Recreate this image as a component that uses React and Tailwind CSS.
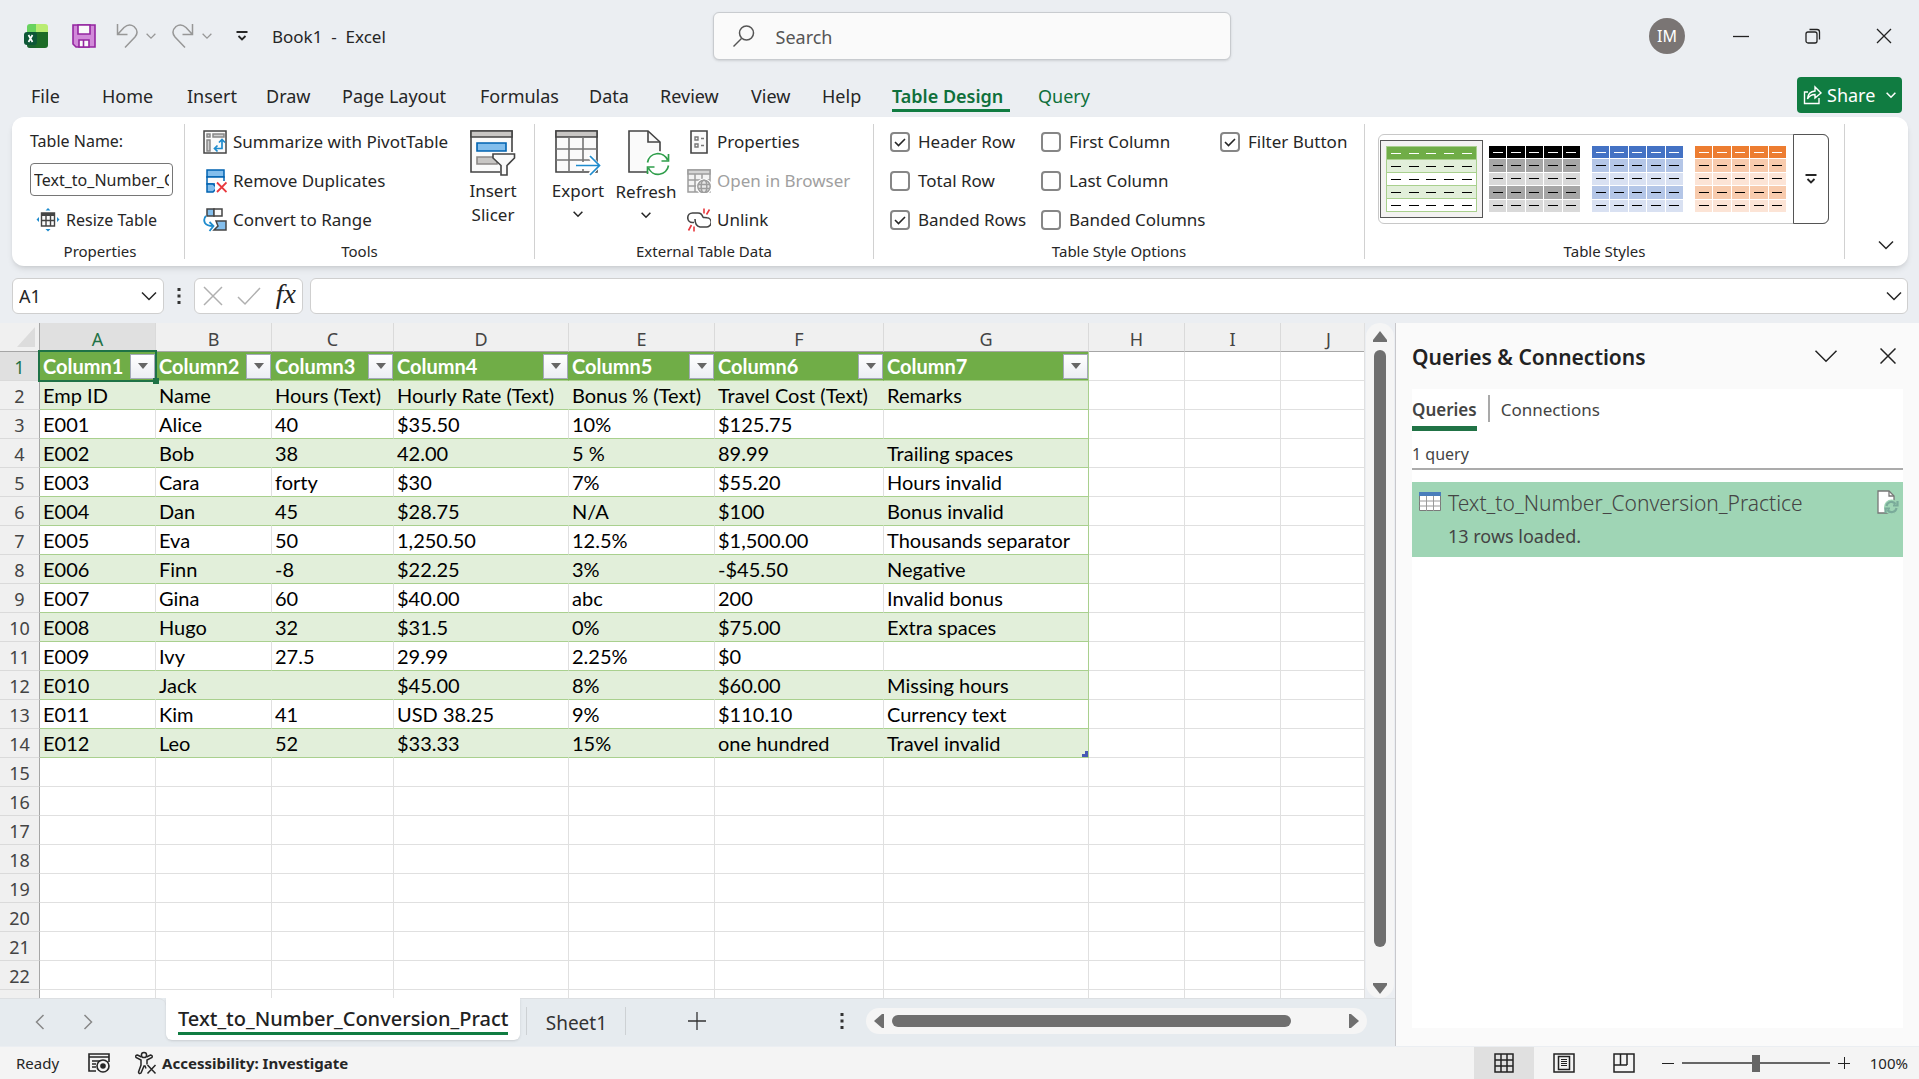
import React, { useState } from 'react';

const COLUMNS = ['A', 'B', 'C', 'D', 'E', 'F', 'G', 'H', 'I', 'J'];
const COL_WIDTHS = ['w-[116px]', 'w-[116px]', 'w-[122px]', 'w-[175px]', 'w-[146px]', 'w-[169px]', 'w-[205px]', 'w-24', 'w-24', 'w-24'];

const ROWS = [
    ['Column1', 'Column2', 'Column3', 'Column4', 'Column5', 'Column6', 'Column7'],
    ['Emp ID', 'Name', 'Hours (Text)', 'Hourly Rate (Text)', 'Bonus % (Text)', 'Travel Cost (Text)', 'Remarks'],
    ['E001', 'Alice', '40', '$35.50', '10%', '$125.75', ''],
    ['E002', 'Bob', '38', '42.00', '5 %', '89.99', 'Trailing spaces'],
    ['E003', 'Cara', 'forty', '$30', '7%', '$55.20', 'Hours invalid'],
    ['E004', 'Dan', '45', '$28.75', 'N/A', '$100', 'Bonus invalid'],
    ['E005', 'Eva', '50', '1,250.50', '12.5%', '$1,500.00', 'Thousands separator'],
    ['E006', 'Finn', '-8', '$22.25', '3%', '-$45.50', 'Negative'],
    ['E007', 'Gina', '60', '$40.00', 'abc', '200', 'Invalid bonus'],
    ['E008', 'Hugo', '32', '$31.5', '0%', '$75.00', 'Extra spaces'],
    ['E009', 'Ivy', '27.5', '29.99', '2.25%', '$0', ''],
    ['E010', 'Jack', '', '$45.00', '8%', '$60.00', 'Missing hours'],
    ['E011', 'Kim', '41', 'USD 38.25', '9%', '$110.10', 'Currency text'],
    ['E012', 'Leo', '52', '$33.33', '15%', 'one hundred', 'Travel invalid'],
];

const TOTAL_ROWS = 23;

const MENU = ['File', 'Home', 'Insert', 'Draw', 'Page Layout', 'Formulas', 'Data', 'Review', 'View', 'Help'];
const MENU_WIDTHS = ['w-[71px]', 'w-[85px]', 'w-[79px]', 'w-[76px]', 'w-[138px]', 'w-[109px]', 'w-[71px]', 'w-[91px]', 'w-[71px]', 'w-[70px]'];

const STYLES = [
    { name: 'Black', head: 'bg-black', dark: 'bg-[#a6a6a6]', light: 'bg-[#d9d9d9]' },
    { name: 'Blue', head: 'bg-[#4472c4]', dark: 'bg-[#b4c6e7]', light: 'bg-[#d9e1f2]' },
    { name: 'Orange', head: 'bg-[#ed7d31]', dark: 'bg-[#f8cbad]', light: 'bg-[#fce4d6]' },
];

/* ---------- Icons ---------- */

const Chevron = ({ className = 'w-4 h-4', strokeWidth = 1.5 }) => (
    <svg viewBox="0 0 16 16" className={className} fill="none" stroke="currentColor" strokeWidth={strokeWidth}>
        <path d="M1 4.500l7 7 7-7" />
    </svg>
);

const MoreDown = () => (
    <svg width="12" height="12" viewBox="0 0 12 12" fill="none" stroke="currentColor">
        <path d="M0.5 2h11" strokeWidth="2" />
        <path d="M2.5 6l3.500 3.500L9.500 6" strokeWidth="1.800" />
    </svg>
);

const ExcelLogo = () => (
    <svg width="24" height="24" viewBox="0 0 24 24">
        <path d="M3 3q0-3 3-3h6v8H3z" fill="#68d25f" />
        <path d="M12 0h9q3 0 3 3v5H12z" fill="#b9ec72" />
        <path d="M3 8h21v13q0 3-3 3H6q-3 0-3-3z" fill="#1c6b27" />
        <path d="M3 8h9v16H6q-3 0-3-3z" fill="#185c37" opacity=".5" />
        <rect x="0" y="8" width="13" height="13" rx="3" fill="#0d5737" />
        <path d="M4.500 11l4 7M8.500 11l-4 7" stroke="#fff" strokeWidth="1.700" />
    </svg>
);

const SaveIcon = () => (
    <svg width="24" height="24" viewBox="0 0 24 24" fill="#d18ad9" stroke="#9426a0" strokeWidth="1.600">
        <path d="M1 1h22v22H4l-3-3z" />
        <path d="M6 1h12v9H6z" fill="#fafafa" />
        <path d="M7 23v-7h10v7z" fill="#fafafa" />
        <path d="M11.500 16v7" />
    </svg>
);

const UndoIcon = ({ flip }) => (
    <svg width="22" height="24" viewBox="0 0 22 24" fill="none" stroke="#979797" strokeWidth="1.500" className={flip ? '-scale-x-100' : ''}>
        <path d="M1.500 0v10.500h10M2 10L8 3.500Q13-1 18 2.500q5.500 5 1 10.500L9 23.500" />
    </svg>
);

const PivotIcon = () => (
    <svg width="24" height="24" viewBox="0 0 24 24" fill="none" stroke="#444" strokeWidth="1.500">
        <rect x="1" y="1" width="22" height="22" fill="#fafafa" />
        <path d="M4 4h3v3H4zM10 4h11v3H10zM4 10h3v11H4z" fill="#d0d0d0" stroke="#888" />
        <path d="M12 18.500h7v-8M14.500 15.500l-3 3 3 3M16 12.500l3-3 3 3" stroke="#1e8bcd" strokeWidth="1.700" />
    </svg>
);

const DuplicatesIcon = () => (
    <svg width="24" height="24" viewBox="0 0 24 24" fill="#83beec" stroke="#0063b1" strokeWidth="1.500">
        <path d="M4 1h17v7H4z" />
        <path d="M4 8h17v7H4z" fill="#fafafa" />
        <path d="M4 15h6l4 4-4 4H4z" />
        <path d="M12 12h12v12H12z" fill="#fff" stroke="none" />
        <path d="M14 13.500l9.500 9.500M23.500 13.500L14 23" stroke="#e8383d" strokeWidth="1.800" />
    </svg>
);

const RangeIcon = () => (
    <svg width="24" height="24" viewBox="0 0 24 24" fill="#83beec" stroke="#444" strokeWidth="1.500">
        <path d="M4 1h7v7H4z" />
        <path d="M11 1h8v7h-8z" fill="#fafafa" />
        <path d="M13 13h10v9H11l4-4z" />
        <path d="M3 8q-3 3-1 7 2 3 8 3M6.500 14l4 4-4 5" fill="none" stroke="#1e8bcd" strokeWidth="1.800" />
    </svg>
);

const ResizeIcon = () => (
    <svg width="24" height="24" viewBox="0 0 24 24" fill="none" stroke="#444" strokeWidth="1.400">
        <path d="M5.500 5h13v13h-13z" fill="#fafafa" />
        <path d="M5.500 6.500h13" strokeWidth="3" />
        <path d="M5.500 12.500h13M10 8v10M14.500 8v10" />
        <path d="M12 0l2.500 2.500h-5zM12 23.500l2.500-2.500h-5zM0.500 11.500L3 9v5zM23.500 11.500L21 9v5z" fill="#1e8bcd" stroke="none" />
    </svg>
);

const SlicerIcon = () => (
    <svg width="46" height="46" viewBox="0 0 46 46" fill="none" stroke="#444" strokeWidth="1.600">
        <path d="M1 1h41v41H1z" fill="#fafafa" />
        <path d="M1 1h41v6H1z" fill="#c8c6c4" />
        <path d="M7 13h29v8H7z" fill="#83beec" stroke="#0063b1" />
        <path d="M7 27h20v7H7z" fill="#c8c6c4" stroke="#8a8886" />
        <path d="M21 22h25v24H30V34z" fill="#fff" stroke="none" />
        <path d="M23 24h21.500v4L37 35.500V45h-6v-9.500L23 28z" fill="#fafafa" />
    </svg>
);

const ExportIcon = () => (
    <svg width="46" height="46" viewBox="0 0 46 46" fill="none" stroke="#444" strokeWidth="1.600">
        <path d="M1 1h41v41H1z" fill="#fafafa" />
        <path d="M1 1h41v6H1z" fill="#c8c6c4" />
        <path d="M1 19h41M1 30h41M14 7v35M28 7v35" stroke="#767676" />
        <path d="M22 32h14l-4-7h5l9 11-9 10h-5l4-7H22z" fill="#fff" stroke="none" />
        <path d="M21 35.500h23M35 26l9.500 9.500L35 45" stroke="#1e8bcd" strokeWidth="1.700" />
    </svg>
);

const RefreshIcon = () => (
    <svg width="42" height="46" viewBox="0 0 42 46" fill="none" stroke="#444" strokeWidth="1.600">
        <path d="M1 1h19l12 11v30H1z" fill="#fafafa" />
        <path d="M20 1v11h12" />
        <circle cx="30" cy="34" r="13" fill="#fff" stroke="none" />
        <path d="M19.500 32.500a10.500 10.500 0 0 1 20-2.500M40.500 35.500a10.500 10.500 0 0 1-20 2.500M40.500 24v7h-7M19.500 44v-7h7" stroke="#2f9e4b" strokeWidth="1.700" />
    </svg>
);

const PropertiesIcon = () => (
    <svg width="24" height="24" viewBox="0 0 24 24" fill="none" stroke="#444" strokeWidth="1.600">
        <path d="M4 1h16v22H4z" fill="#fafafa" />
        <path d="M8 7h3v3H8zM8 14h3v3H8zM14 8.500h3M14 15.500h3" stroke="#777" strokeWidth="1.400" />
    </svg>
);

const BrowserIcon = () => (
    <svg width="24" height="24" viewBox="0 0 24 24" fill="none" stroke="#9d9d9d" strokeWidth="1.500">
        <path d="M1 1h22v22H1z" fill="#f3f3f3" />
        <path d="M1 1h22v4H1z" fill="#d5d5d5" />
        <path d="M1 11h22M1 17h22M8 5v18M15 5v18" />
        <circle cx="17" cy="17.500" r="8" fill="#fff" stroke="none" />
        <circle cx="17" cy="17.500" r="6.200" fill="#e8e8e8" />
        <ellipse cx="17" cy="17.500" rx="2.800" ry="6.200" />
        <path d="M11 15.500h12M11 19.500h12" />
    </svg>
);

const UnlinkIcon = () => (
    <svg width="24" height="24" viewBox="0 0 24 24" fill="none" stroke="#444" strokeWidth="1.600">
        <path d="M7 14.500H5.500a4.500 4.500 0 0 1 0-9.500H11q4 0 5 4.500" />
        <path d="M8 11q0 7 5 8h6a4.500 4.500 0 0 0 1-9.300q-2-.4-4-.2" />
        <path d="M17 0.500v5M22.500 1.500l-3 5M1.500 22.500l3-5.500M7 18.500v5" stroke="#e8383d" />
    </svg>
);

const AccessibilityIcon = () => (
    <svg width="24" height="24" viewBox="0 0 24 24" fill="none" stroke="#262626" strokeWidth="1.500">
        <circle cx="10" cy="4" r="2.600" />
        <path d="M7.500 6L3.500 4Q1 4 2 6.500L7 9v5l-2.500 7q.5 2.500 2.500 1l3-7h1l1 2.500M12.500 6l4-2q2.500.5 1.500 2.500L13 9v4.500" />
        <path d="M13.500 14l8 8.500M21.500 14l-8 8.500" />
    </svg>
);

const MacroIcon = () => (
    <svg width="22" height="20" viewBox="0 0 22 20" fill="none" stroke="#262626" strokeWidth="1.600">
        <path d="M8 18H1V1h20v8" />
        <path d="M1 4h20M4 8h8M4 11h4M4 14h4" />
        <circle cx="15" cy="13" r="6" />
        <circle cx="15" cy="13" r="2.800" fill="#262626" stroke="none" />
    </svg>
);

const QueryTableIcon = () => (
    <svg width="22" height="20" viewBox="0 0 22 20" fill="#fff" stroke="#7a7a7a">
        <path d="M.5.5h21v18H.5z" />
        <path d="M.5 9h21M.5 14h21M7.500 4v15M14.500 4v15" stroke="#9a9a9a" />
        <path d="M0 0h22v4H0z" fill="#4a7ebb" stroke="none" />
    </svg>
);

const QueryRefreshIcon = () => (
    <svg width="22" height="24" viewBox="0 0 22 24" fill="none">
        <path d="M1 1h11l5 5v17H1z" fill="#fff" stroke="#777" strokeWidth="1.300" />
        <path d="M12 1v5h5" stroke="#777" strokeWidth="1.300" />
        <circle cx="14.500" cy="17" r="7.500" fill="#9fd5b5" />
        <path d="M9.500 16a5 5 0 0 1 9-2M19.500 18a5 5 0 0 1-9 2M20.500 11v4.500H16M8.500 23v-4.500H13" stroke="#7aab9a" strokeWidth="2.200" />
    </svg>
);

/* ---------- Ribbon parts ---------- */

const Group = ({ label, className, contentClass, children }) => (
    <section aria-label={label} className={`flex flex-col border-r border-[#d1d1d1] shrink-0 ${className}`}>
        <div className={`flex-1 ${contentClass}`}>{children}</div>
        <div className="h-[18px] text-center text-[15px] leading-5">{label}</div>
    </section>
);

const ToolButton = ({ icon, label, disabled }) => (
    <button disabled={disabled} className="flex items-center gap-1.5 h-[39px] whitespace-nowrap disabled:text-[#a0a0a0]">
        {icon}
        {label}
    </button>
);

const Check = ({ label, initial = false }) => {
    const [checked, setChecked] = useState(initial);
    return (
        <label className="flex items-center gap-2 h-[39px] whitespace-nowrap">
            <span className="grid w-5 h-5">
                <input
                    type="checkbox"
                    checked={checked}
                    onChange={(e) => setChecked(e.target.checked)}
                    className="col-start-1 row-start-1 appearance-none w-5 h-5 border-2 border-[#868686] rounded-sm bg-white"
                />
                {checked && (
                    <svg viewBox="0 0 20 20" className="col-start-1 row-start-1 w-5 h-5 pointer-events-none" fill="none" stroke="#262626" strokeWidth="1.600">
                        <path d="M5 10l3.500 3.500L15 7" />
                    </svg>
                )}
            </span>
            {label}
        </label>
    );
};

const StylePreview = ({ head, dark, light }) => (
    <span className="grid grid-cols-5 gap-px w-[91px] h-[66px]">
        {[0, 1, 2, 3, 4].map(row => (
            [0, 1, 2, 3, 4].map(col => (
                <span key={`${row}-${col}`} className={`grid place-items-center ${row === 0 ? head : row % 2 ? dark : light}`}>
                    <span className={`w-2.5 h-px ${row === 0 ? 'bg-white' : 'bg-black'}`} />
                </span>
            ))
        ))}
    </span>
);

const GreenPreview = () => (
    <span className="flex flex-col w-[91px] h-[66px] border border-[#a9d08e] bg-white divide-y divide-[#a9d08e]">
        {[0, 1, 2, 3, 4].map(row => (
            <span key={row} className={`flex-1 flex items-center justify-around ${row === 0 ? 'bg-[#70ad47]' : row % 2 ? 'bg-[#e2efda]' : 'bg-white'}`}>
                {[0, 1, 2, 3, 4].map(col => (
                    <span key={col} className={`w-2.5 h-px ${row === 0 ? 'bg-white' : 'bg-black'}`} />
                ))}
            </span>
        ))}
    </span>
);

const TitleBar = () => (
    <header className="flex items-center h-[72px] shrink-0 pl-6 text-[17px]">
        <div className="flex-1 flex items-center">
            <ExcelLogo />
            <button aria-label="Save" className="ml-6"><SaveIcon /></button>
            <button aria-label="Undo" className="ml-5 flex items-center gap-2 text-[#979797]">
                <UndoIcon />
                <Chevron className="w-2.5 h-2.5" strokeWidth={2} />
            </button>
            <button aria-label="Redo" className="ml-4 flex items-center gap-2 text-[#979797]">
                <UndoIcon flip />
                <Chevron className="w-2.5 h-2.5" strokeWidth={2} />
            </button>
            <button aria-label="Customize toolbar" className="ml-6"><MoreDown /></button>
            <span className="ml-6 whitespace-pre pt-0.5">Book1  -  Excel</span>
        </div>
        <label className="flex items-center w-[518px] h-12 px-4 bg-[#fafafa] border border-[#c8cbcf] rounded-md shadow-sm">
            <svg width="26" height="26" viewBox="0 0 26 26" fill="none" stroke="#555" strokeWidth="1.500">
                <circle cx="16.500" cy="10" r="7" />
                <path d="M11.500 15.500L3.500 23.500" />
            </svg>
            <input aria-label="Search" placeholder="Search" className="ml-5 pt-0.5 flex-1 min-w-0 text-lg bg-transparent outline-none placeholder:text-[#555]" />
        </label>
        <div className="flex-1 flex items-center justify-end">
            <button aria-label="Account" className="grid place-items-center w-9 h-9 mr-5 rounded-full bg-[#7a7574] text-white text-base">IM</button>
            <button aria-label="Minimize" className="grid place-items-center w-[72px] h-12">
                <svg width="16" height="16" viewBox="0 0 16 16" stroke="#222" strokeWidth="1.300"><path d="M0 8.500h16" /></svg>
            </button>
            <button aria-label="Restore" className="grid place-items-center w-[72px] h-12">
                <svg width="16" height="16" viewBox="0 0 16 16" fill="none" stroke="#222" strokeWidth="1.300">
                    <rect x="1" y="4" width="11" height="11" rx="2" />
                    <path d="M4.500 1.500H12q2.500 0 2.500 2.500v7.500" />
                </svg>
            </button>
            <button aria-label="Close" className="grid place-items-center w-[70px] h-12">
                <svg width="16" height="16" viewBox="0 0 16 16" stroke="#222" strokeWidth="1.300"><path d="M1 1l14 14M15 1L1 15" /></svg>
            </button>
        </div>
    </header>
);

const MenuBar = () => (
    <nav className="flex items-center h-[45px] shrink-0 pl-[31px] pr-[17px] text-lg">
        {MENU.map((item, i) => (
            <button key={item} className={`text-left pt-0.5 whitespace-nowrap ${MENU_WIDTHS[i]}`}>{item}</button>
        ))}
        <button className="w-[118px] h-[34px] pt-1 border-b-3 border-[#107c41] font-semibold text-left text-[#0f703b] whitespace-nowrap">Table Design</button>
        <button className="ml-7 pt-0.5 text-[#0f703b]">Query</button>
        <button className="flex items-center ml-auto w-[105px] h-9 px-1.5 rounded bg-[#107c41] text-white">
            <svg width="20" height="20" viewBox="0 0 20 20" fill="none" stroke="currentColor" strokeWidth="1.400">
                <path d="M5 7H1.500v11.500H16V13" />
                <path d="M4.500 14Q5 6.500 12 6V2l6 6-6 5V9.500Q7 9.500 4.500 14z" />
            </svg>
            <span className="ml-1 flex-1 text-left">Share</span>
            <Chevron className="w-2.5 h-2.5" strokeWidth={2.5} />
        </button>
    </nav>
);

const Ribbon = () => (
    <div className="flex shrink-0 ml-3 mr-[11px] h-[149px] py-[7px] rounded-xl bg-white shadow-md text-[17px]">
        <Group label="Properties" className="w-[173px] pl-1" contentClass="pl-3.5 pr-[11px] text-base">
            <label htmlFor="table-name" className="flex items-center h-[33px]">Table Name:</label>
            <input
                id="table-name"
                defaultValue="Text_to_Number_Conversion_Pract"
                className="block w-full h-[33px] mt-1.5 mb-1 px-[3px] border border-[#767676] rounded bg-white"
            />
            <div className="pl-1.5"><ToolButton icon={<ResizeIcon />} label="Resize Table" /></div>
        </Group>

        <Group label="Tools" className="w-[350px]" contentClass="pl-[18px]">
            <div className="flex">
                <div className="flex-1 -mt-0.5">
                    <ToolButton icon={<PivotIcon />} label="Summarize with PivotTable" />
                    <ToolButton icon={<DuplicatesIcon />} label="Remove Duplicates" />
                    <ToolButton icon={<RangeIcon />} label="Convert to Range" />
                </div>
                <button className="flex flex-col items-center w-[82px] pt-1.5 leading-6">
                    <SlicerIcon />
                    <span className="mt-[3px]">Insert</span>
                    <span>Slicer</span>
                </button>
            </div>
        </Group>

        <Group label="External Table Data" className="w-[339px]" contentClass="pl-2">
            <div className="flex items-start">
                <button className="flex flex-col items-center w-[70px] pt-1.5 leading-6">
                    <ExportIcon />
                    <span className="mt-[3px]">Export</span>
                    <Chevron className="w-2.5 h-2.5 mt-1.5" strokeWidth={2.5} />
                </button>
                <button className="flex flex-col items-center w-[66px] pt-1.5 leading-6">
                    <span className="flex pl-1.5"><RefreshIcon /></span>
                    <span className="mt-1">Refresh</span>
                    <Chevron className="w-2.5 h-2.5 mt-1.5" strokeWidth={2.5} />
                </button>
                <div className="-mt-0.5 ml-2">
                    <ToolButton icon={<PropertiesIcon />} label="Properties" />
                    <ToolButton icon={<BrowserIcon />} label="Open in Browser" disabled />
                    <ToolButton icon={<UnlinkIcon />} label="Unlink" />
                </div>
            </div>
        </Group>

        <Group label="Table Style Options" className="w-[491px]" contentClass="pl-4">
            <div className="flex -mt-0.5">
                <div className="w-[151px]">
                    <Check label="Header Row" initial />
                    <Check label="Total Row" />
                    <Check label="Banded Rows" initial />
                </div>
                <div className="w-[179px]">
                    <Check label="First Column" />
                    <Check label="Last Column" />
                    <Check label="Banded Columns" />
                </div>
                <div>
                    <Check label="Filter Button" initial />
                </div>
            </div>
        </Group>

        <Group label="Table Styles" className="w-[480px]" contentClass="pl-[13px] pr-[15px]">
            <div className="flex items-center w-full h-[90px] mt-2.5 border border-[#c8c8c8] rounded-md">
                <button aria-label="Green" className="grid place-items-center w-[103px] h-[78px] ml-px border border-[#555] bg-[#f3f2f1]">
                    <GreenPreview />
                </button>
                <div className="flex gap-3 ml-1.5">
                    {STYLES.map(s => (
                        <button key={s.name} aria-label={s.name}>
                            <StylePreview head={s.head} dark={s.dark} light={s.light} />
                        </button>
                    ))}
                </div>
                <button aria-label="More styles" className="grid place-items-center w-9 h-[90px] -my-px -mr-px ml-auto border border-[#555] rounded-r-md">
                    <MoreDown />
                </button>
            </div>
        </Group>

        <button aria-label="Collapse ribbon" className="self-end ml-auto mr-3.5 mb-1.5">
            <Chevron />
        </button>
    </div>
);

const FormulaBar = () => (
    <div className="flex items-center shrink-0 h-9 mt-3 ml-3 mr-[11px] mb-[9px] text-lg">
        <div className="flex items-center w-[152px] h-9 pl-1.5 pr-1.5 border border-[#cfcfcf] rounded-md bg-white">
            <input aria-label="Name box" defaultValue="A1" className="flex-1 min-w-0 outline-none" />
            <Chevron />
        </div>
        <svg width="4" height="16" viewBox="0 0 4 16" fill="#333" className="mx-[13px]">
            <path d="M.5 0h3v3h-3zM.5 6.500h3v3h-3zM.5 13h3v3h-3z" />
        </svg>
        <div className="flex items-center justify-between w-[109px] h-9 pl-2 pr-1.5 border border-[#cfcfcf] rounded-md bg-white">
            <button aria-label="Cancel">
                <svg width="20" height="20" viewBox="0 0 20 20" stroke="#b0b0b0" strokeWidth="1.500"><path d="M1 1l18 18M19 1L1 19" /></svg>
            </button>
            <button aria-label="Enter">
                <svg width="24" height="20" viewBox="0 0 24 20" fill="none" stroke="#b0b0b0" strokeWidth="1.500"><path d="M1 11l7 7L23 2" /></svg>
            </button>
            <button aria-label="Insert function" className="font-['Liberation_Serif',serif] italic text-[28px] leading-6 text-[#222] pb-1">fx</button>
        </div>
        <div className="flex flex-1 items-center h-9 ml-[7px] pl-2 pr-[5px] border border-[#cfcfcf] rounded-md bg-white">
            <input aria-label="Formula" className="flex-1 min-w-0 outline-none" />
            <Chevron />
        </div>
    </div>
);

/* ---------- Sheet ---------- */

const cellClass = (row, col) => {
    if (row >= ROWS.length || col > 6) {
        return 'border-[#e0e0e0]';
    }
    const edge = col === 6 ? 'border-r-[#a9d08e]' : '';
    if (row === 0) return `bg-[#70ad47] text-white font-bold border-b-[#a9d08e] ${edge || 'border-r-[#70ad47]'}`;
    if (row % 2) return `bg-[#e2efda] border-b-[#a9d08e] ${edge || 'border-r-[#e2efda]'}`;
    return `border-b-[#a9d08e] ${edge || 'border-r-[#e0e0e0]'}`;
};

const FilterButton = ({ column }) => (
    <button aria-label={`Filter ${column}`} className="grid place-items-center w-[25px] h-[25px] shrink-0 border border-[#a3a9b8] bg-linear-to-b from-white to-[#eceef4]">
        <svg width="10" height="6" viewBox="0 0 10 6"><path d="M0 0h10L5 6z" fill="#666" /></svg>
    </button>
);

const Sheet = () => (
    <div className="relative flex-1 overflow-hidden bg-white border-r border-[#e0e0e0]">
        <table className="table-fixed w-[1336px] border-separate border-spacing-0 font-[Lato,sans-serif] text-xl leading-6 text-black">
            <thead>
                <tr className="h-[29px]">
                    <th className="w-10 p-0 bg-[#f0f0f0] border-r border-b border-[#a6a6a6]" aria-label="Select all">
                        <svg width="18" height="20" viewBox="0 0 18 20" className="ml-auto mr-1"><path d="M18 0v20H0z" fill="#dcdcdc" /></svg>
                    </th>
                    {COLUMNS.map((c, i) => (
                        <th
                            key={c}
                            className={`p-0 pt-[3px] border-b border-b-[#a6a6a6] border-r border-r-[#dadada] font-normal font-['Noto_Sans',sans-serif] text-lg leading-6 ${COL_WIDTHS[i]} ${i === 0 ? 'bg-[#e0e0e0] text-[#1f7246]' : 'bg-[#f0f0f0] text-[#444]'}`}
                        >
                            {c}
                        </th>
                    ))}
                </tr>
            </thead>
            <tbody>
                {Array.from({ length: TOTAL_ROWS }, (_, r) => (
                    <tr key={r} className="h-[29px]">
                        <th className={`p-0 pt-0.5 border-b border-b-[#dadada] border-r border-r-[#a6a6a6] font-normal font-['Noto_Sans',sans-serif] text-lg leading-6 ${r === 0 ? 'bg-[#e0e0e0] text-[#1f7246]' : 'bg-[#f0f0f0] text-[#444]'}`}>
                            {r < 22 ? r + 1 : ''}
                        </th>
                        {COLUMNS.map((c, i) => {
                            const value = ROWS[r]?.[i] ?? '';
                            return (
                                <td key={c} className={`p-0 border-b border-r whitespace-nowrap ${cellClass(r, i)}`}>
                                    {r === 0 && i < 7 ? (
                                        <div className="flex items-center justify-between pl-[3px]">
                                            {value}
                                            <FilterButton column={value} />
                                        </div>
                                    ) : (
                                        <div className="pl-[3px]">{value}</div>
                                    )}
                                </td>
                            );
                        })}
                    </tr>
                ))}
            </tbody>
        </table>
        {/* Active cell outline and table resize corner */}
        <div className="absolute left-[38px] top-[27px] w-[119px] h-8 border-2 border-[#1f7246] pointer-events-none">
            <div className="absolute -right-1 -bottom-1 w-1.5 h-1.5 bg-[#1f7246]" />
        </div>
        <svg width="6" height="6" viewBox="0 0 6 6" className="absolute left-[1082px] top-[428px]">
            <path d="M3 0h3v6H0V3h3z" fill="#4759b5" />
        </svg>
    </div>
);

const VerticalScrollbar = () => (
    <div className="flex flex-col items-center w-7 ml-px mr-px shrink-0 pt-2 pb-1 rounded-full bg-[#f5f5f5]">
        <svg width="14" height="11" viewBox="0 0 14 11"><path d="M7 0l7 9v2H0V9z" fill="#6f6f6f" /></svg>
        <div className="w-3 mt-2 mb-9 flex-1 rounded-full bg-[#6f6f6f]" />
        <svg width="14" height="11" viewBox="0 0 14 11"><path d="M7 11l7-9V0H0v2z" fill="#6f6f6f" /></svg>
    </div>
);

const SheetTabs = () => (
    <div className="flex shrink-0 h-12 bg-[#e6ebef]">
        <div className="flex items-center gap-8 w-[166px] pl-8 text-[#888] h-[46px] border-t border-[#dcdfe2] rounded-tr-lg">
            <button aria-label="Previous sheet"><Chevron className="w-4 h-4 rotate-90" /></button>
            <button aria-label="Next sheet"><Chevron className="w-4 h-4 -rotate-90" /></button>
        </div>
        <button className="h-[42px] px-3 bg-white rounded-b-md shadow-sm text-xl font-medium text-[#222] whitespace-nowrap">
            <span className="block h-8 pt-0.5 border-b-3 border-[#107c41]">Text_to_Number_Conversion_Pract</span>
        </button>
        <div className="flex-1 flex items-center pb-1 border-t border-[#dcdfe2] text-[19px] text-[#333]">
            <button className="ml-1.5 h-7 w-[100px] pt-1 border-x border-[#cdd1d4] leading-6">Sheet1</button>
            <button aria-label="New sheet" className="ml-[62px]">
                <svg width="18" height="18" viewBox="0 0 18 18" stroke="#333" strokeWidth="1.300"><path d="M9 0v18M0 9h18" /></svg>
            </button>
            <svg width="4" height="16" viewBox="0 0 4 16" fill="#333" className="ml-auto mr-[22px]">
                <path d="M.5 0h3v3h-3zM.5 6.500h3v3h-3zM.5 13h3v3h-3z" />
            </svg>
            <div className="flex items-center w-[501px] h-[26px] px-2 mr-7 rounded-full bg-[#f5f5f5]">
                <svg width="10" height="14" viewBox="0 0 10 14"><path d="M0 7l8-7h2v14H8z" fill="#6f6f6f" /></svg>
                <div className="ml-2 w-[399px] h-3 rounded-full bg-[#6f6f6f]" />
                <svg width="10" height="14" viewBox="0 0 10 14" className="ml-auto"><path d="M10 7L2 0H0v14h2z" fill="#6f6f6f" /></svg>
            </div>
        </div>
    </div>
);

const QueriesPanel = () => (
    <aside className="flex flex-col w-[524px] shrink-0 pl-4 pr-4 pb-[18px] bg-[#fafafa] border-l border-[#c8c8cc] text-[#444]">
        <div className="flex items-center h-[66px] pr-[7px] text-[#222]">
            <h2 className="flex-1 pt-1 text-[21px] font-semibold">Queries &amp; Connections</h2>
            <button aria-label="Panel options" className="mr-[42px]"><Chevron className="w-6 h-6" strokeWidth={1} /></button>
            <button aria-label="Close panel">
                <svg width="16" height="16" viewBox="0 0 16 16" stroke="#222" strokeWidth="1.500"><path d="M.5.5l15 15M15.500.5l-15 15" /></svg>
            </button>
        </div>
        <div className="flex-1 bg-white">
            <div className="flex items-start h-[52px] text-[17px]">
                <button className="mt-1 h-[38px] border-b-5 border-[#217346] font-semibold">Queries</button>
                <span className="mt-1.5 mx-[11px] h-[27px] w-0.5 bg-[#a9a9a9]" />
                <button className="mt-1 h-[33px]">Connections</button>
            </div>
            <div className="h-[29px] pt-px border-b-2 border-[#ababab] text-base leading-6">1 query</div>
            <div className="flex items-start h-[75px] mt-3 pl-[7px] pr-1 bg-[#9fd5b5]">
                <span className="mt-2.5"><QueryTableIcon /></span>
                <div className="flex-1 ml-[7px]">
                    <div className="pt-[5px] pb-px text-[21px] leading-8 font-light">Text_to_Number_Conversion_Practice</div>
                    <div className="text-lg leading-8">13 rows loaded.</div>
                </div>
                <span className="mt-2"><QueryRefreshIcon /></span>
            </div>
        </div>
    </aside>
);

const StatusBar = () => {
    const [zoom, setZoom] = useState(100);
    return (
        <footer className="flex items-center shrink-0 h-8 mt-px pl-4 pr-[11px] bg-[#f4f4f4] text-[15px]">
            <span>Ready</span>
            <button aria-label="Record macro" className="ml-[29px]"><MacroIcon /></button>
            <button className="flex items-center gap-1 ml-6 font-bold"><AccessibilityIcon />Accessibility: Investigate</button>
            <div className="flex items-center h-8 ml-auto">
                <button aria-label="Normal view" className="grid place-items-center w-15 h-8 bg-[#e0e0e0]">
                    <svg width="20" height="20" viewBox="0 0 20 20" fill="none" stroke="#222" strokeWidth="1.500"><path d="M1 1h18v18H1zM7 1v18M13 1v18M1 7h18M1 13h18" /></svg>
                </button>
                <button aria-label="Page layout view" className="grid place-items-center w-15 h-8">
                    <svg width="22" height="20" viewBox="0 0 22 20" fill="none" stroke="#222" strokeWidth="1.500">
                        <path d="M1 1h20v18H1zM5.500 3.500h11v13h-11z" />
                        <path d="M8 6.500h6M8 8.500h6M8 10.500h6M8 12.500h6" strokeWidth="1" />
                    </svg>
                </button>
                <button aria-label="Page break view" className="grid place-items-center w-15 h-8">
                    <svg width="22" height="20" viewBox="0 0 22 20" fill="none" stroke="#222" strokeWidth="1.500"><path d="M1 1h20v18H1zM7.500 1v11M14 1v11M1 12h13" /></svg>
                </button>
                <button aria-label="Zoom out" className="ml-2">
                    <svg width="12" height="12" viewBox="0 0 12 12" stroke="#222"><path d="M0 6.500h12" /></svg>
                </button>
                <input
                    type="range"
                    aria-label="Zoom"
                    min="0"
                    max="200"
                    value={zoom}
                    onChange={(e) => setZoom(Number(e.target.value))}
                    className="w-[148px] h-0.5 mx-2 appearance-none bg-[#666] [&::-webkit-slider-thumb]:appearance-none [&::-webkit-slider-thumb]:w-2 [&::-webkit-slider-thumb]:h-[17px] [&::-webkit-slider-thumb]:bg-[#666]"
                />
                <button aria-label="Zoom in">
                    <svg width="12" height="12" viewBox="0 0 12 12" stroke="#222"><path d="M0 6.500h12M6.500 0v12" /></svg>
                </button>
                <span className="ml-[18px] w-10 text-right">{zoom}%</span>
            </div>
        </footer>
    );
};

const App = () => {
    return (
        <div className="flex flex-col h-screen overflow-hidden bg-[#ebeef2] font-['Noto_Sans',sans-serif] text-[#262626]">
            <TitleBar />
            <MenuBar />
            <Ribbon />
            <FormulaBar />
            <main className="flex flex-1 min-h-0">
                <div className="flex flex-col flex-1 min-w-0">
                    <div className="flex flex-1 min-h-0">
                        <Sheet />
                        <VerticalScrollbar />
                    </div>
                    <SheetTabs />
                </div>
                <QueriesPanel />
            </main>
            <StatusBar />
        </div>
    );
};

export default App;
